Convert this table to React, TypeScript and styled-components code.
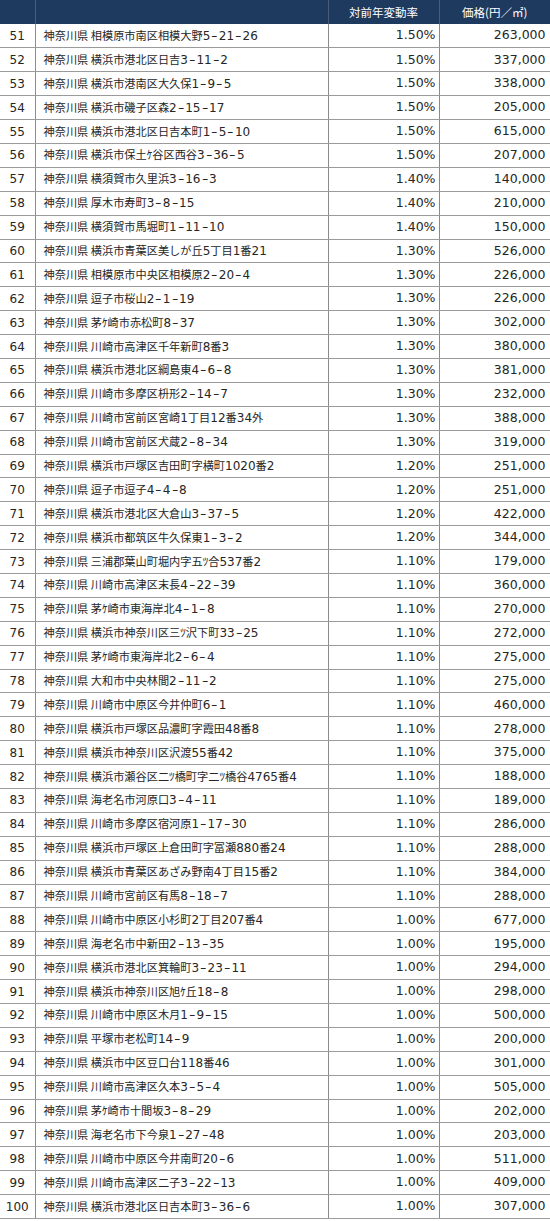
import styled, { createGlobalStyle } from "styled-components";

type Row = [number, string, string, string];

const rows: Row[] = [
  [51, "相模原市南区相模大野5-21-26", "1.50%", "263,000"],
  [52, "横浜市港北区日吉3-11-2", "1.50%", "337,000"],
  [53, "横浜市港南区大久保1-9-5", "1.50%", "338,000"],
  [54, "横浜市磯子区森2-15-17", "1.50%", "205,000"],
  [55, "横浜市港北区日吉本町1-5-10", "1.50%", "615,000"],
  [56, "横浜市保土ｹ谷区西谷3-36-5", "1.50%", "207,000"],
  [57, "横須賀市久里浜3-16-3", "1.40%", "140,000"],
  [58, "厚木市寿町3-8-15", "1.40%", "210,000"],
  [59, "横須賀市馬堀町1-11-10", "1.40%", "150,000"],
  [60, "横浜市青葉区美しが丘5丁目1番21", "1.30%", "526,000"],
  [61, "相模原市中央区相模原2-20-4", "1.30%", "226,000"],
  [62, "逗子市桜山2-1-19", "1.30%", "226,000"],
  [63, "茅ｹ崎市赤松町8-37", "1.30%", "302,000"],
  [64, "川崎市高津区千年新町8番3", "1.30%", "380,000"],
  [65, "横浜市港北区綱島東4-6-8", "1.30%", "381,000"],
  [66, "川崎市多摩区枡形2-14-7", "1.30%", "232,000"],
  [67, "川崎市宮前区宮崎1丁目12番34外", "1.30%", "388,000"],
  [68, "川崎市宮前区犬蔵2-8-34", "1.30%", "319,000"],
  [69, "横浜市戸塚区吉田町字横町1020番2", "1.20%", "251,000"],
  [70, "逗子市逗子4-4-8", "1.20%", "251,000"],
  [71, "横浜市港北区大倉山3-37-5", "1.20%", "422,000"],
  [72, "横浜市都筑区牛久保東1-3-2", "1.20%", "344,000"],
  [73, "三浦郡葉山町堀内字五ﾂ合537番2", "1.10%", "179,000"],
  [74, "川崎市高津区末長4-22-39", "1.10%", "360,000"],
  [75, "茅ｹ崎市東海岸北4-1-8", "1.10%", "270,000"],
  [76, "横浜市神奈川区三ﾂ沢下町33-25", "1.10%", "272,000"],
  [77, "茅ｹ崎市東海岸北2-6-4", "1.10%", "275,000"],
  [78, "大和市中央林間2-11-2", "1.10%", "275,000"],
  [79, "川崎市中原区今井仲町6-1", "1.10%", "460,000"],
  [80, "横浜市戸塚区品濃町字霞田48番8", "1.10%", "278,000"],
  [81, "横浜市神奈川区沢渡55番42", "1.10%", "375,000"],
  [82, "横浜市瀬谷区二ﾂ橋町字二ﾂ橋谷4765番4", "1.10%", "188,000"],
  [83, "海老名市河原口3-4-11", "1.10%", "189,000"],
  [84, "川崎市多摩区宿河原1-17-30", "1.10%", "286,000"],
  [85, "横浜市戸塚区上倉田町字冨瀬880番24", "1.10%", "288,000"],
  [86, "横浜市青葉区あざみ野南4丁目15番2", "1.10%", "384,000"],
  [87, "川崎市宮前区有馬8-18-7", "1.10%", "288,000"],
  [88, "川崎市中原区小杉町2丁目207番4", "1.00%", "677,000"],
  [89, "海老名市中新田2-13-35", "1.00%", "195,000"],
  [90, "横浜市港北区箕輪町3-23-11", "1.00%", "294,000"],
  [91, "横浜市神奈川区旭ｹ丘18-8", "1.00%", "298,000"],
  [92, "川崎市中原区木月1-9-15", "1.00%", "500,000"],
  [93, "平塚市老松町14-9", "1.00%", "200,000"],
  [94, "横浜市中区豆口台118番46", "1.00%", "301,000"],
  [95, "川崎市高津区久本3-5-4", "1.00%", "505,000"],
  [96, "茅ｹ崎市十間坂3-8-29", "1.00%", "202,000"],
  [97, "海老名市下今泉1-27-48", "1.00%", "203,000"],
  [98, "川崎市中原区今井南町20-6", "1.00%", "511,000"],
  [99, "川崎市高津区二子3-22-13", "1.00%", "409,000"],
  [100, "横浜市港北区日吉本町3-36-6", "1.00%", "307,000"],
];

// 住所の数字とハイフンだけ欧文フォントに切り替える
function Address({ text }: { text: string }) {
  const parts = text.split(/(\d+|-)/).filter(Boolean);
  return (
    <>
      {parts.map((part, i) =>
        part === "-" ? (
          <Hyphen key={i}>-</Hyphen>
        ) : /^\d+$/.test(part) ? (
          <Num key={i}>{part}</Num>
        ) : (
          <span key={i}>{part}</span>
        )
      )}
    </>
  );
}

export default function App() {
  return (
    <>
      <GlobalStyle />
      <Table>
        <colgroup>
          <col style={{ width: 35 }} />
          <col style={{ width: 293 }} />
          <col style={{ width: 111 }} />
          <col style={{ width: 111 }} />
        </colgroup>
        <thead>
          <tr>
            <HeadCell />
            <HeadCell />
            <HeadCell>対前年変動率</HeadCell>
            <HeadCell>価格(円／㎡)</HeadCell>
          </tr>
        </thead>
        <tbody>
          {rows.map(([no, addr, rate, price]) => (
            <BodyRow key={no}>
              <NoCell>{no}</NoCell>
              <AddressCell>
                神奈川県 <Address text={addr} />
              </AddressCell>
              <ValueCell $pad={3}>{rate}</ValueCell>
              <ValueCell $pad={4}>{price}</ValueCell>
            </BodyRow>
          ))}
        </tbody>
      </Table>
    </>
  );
}

const GlobalStyle = createGlobalStyle`
  body {
    margin: 0;
    background: #fff;
    font-family: "Noto Sans CJK JP", "Noto Sans", sans-serif;
  }
`;

const Table = styled.table`
  width: 550px;
  border-collapse: collapse;
  table-layout: fixed;
  color: #262626;
`;

const HeadCell = styled.th`
  height: 24px;
  padding: 0;
  background: #1f3a5f;
  color: #fff;
  font-size: 11.5px;
  font-weight: 400;
  text-align: center;
  border-left: 1px solid #4a5e78;
  &:first-child {
    border-left: none;
  }
`;

const BodyRow = styled.tr`
  height: 23.9px;
`;

const Cell = styled.td`
  padding: 0;
  line-height: 1;
  white-space: nowrap;
  border-bottom: 1px solid #9a9a9a;
  border-left: 1px solid #8a8a8a;
`;

const NoCell = styled(Cell)`
  border-left: none;
  text-align: center;
  font-family: "DejaVu Sans", sans-serif;
  font-size: 12px;
`;

const AddressCell = styled(Cell)`
  text-align: left;
  padding-left: 8px;
  font-size: 11.2px;
`;

const ValueCell = styled(Cell)<{ $pad: number }>`
  text-align: right;
  padding-right: ${(p) => p.$pad}px;
  font-family: "DejaVu Sans", sans-serif;
  font-size: 12.5px;
  &:last-child {
    border-right: 1px solid #8a8a8a;
  }
`;

const Num = styled.span`
  font-family: "DejaVu Sans", sans-serif;
  font-size: 12px;
`;

const Hyphen = styled(Num)`
  display: inline-block;
  width: 8.5px;
  text-align: center;
  transform: scaleX(1.5);
`;
